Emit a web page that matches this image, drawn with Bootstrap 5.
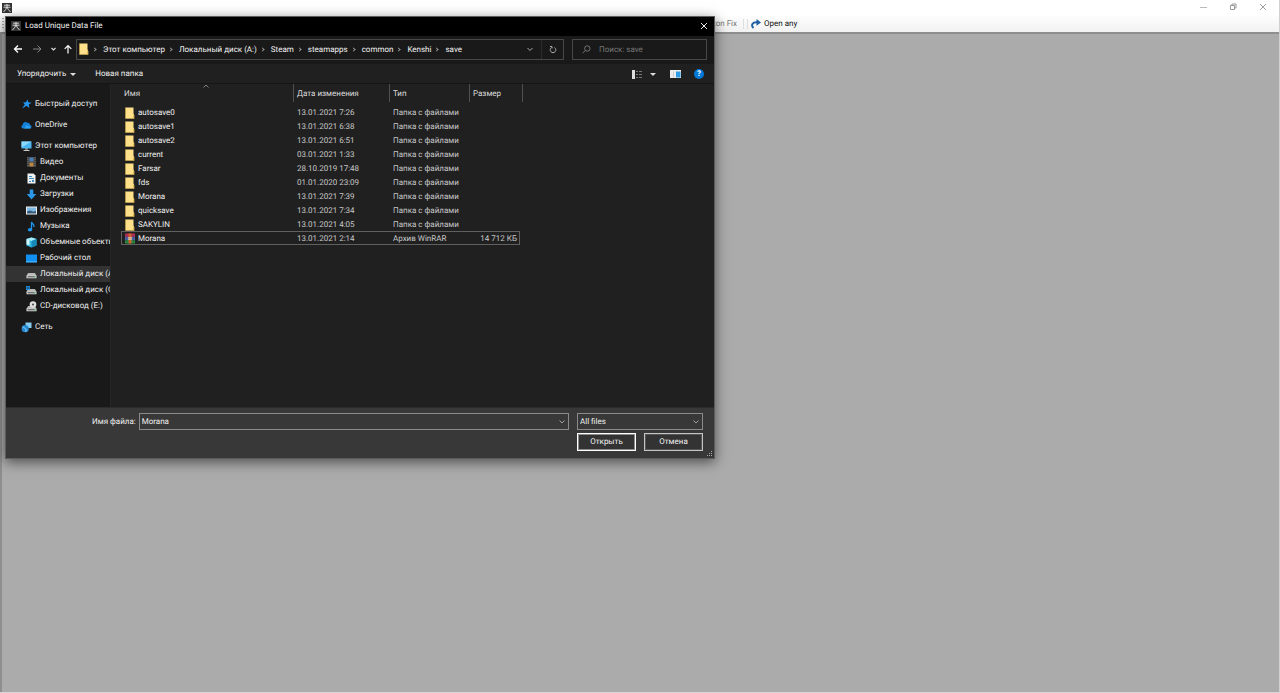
<!DOCTYPE html>
<html lang="ru">
<head>
<meta charset="utf-8">
<meta name="viewport" content="width=device-width, initial-scale=1">
<title>Load Unique Data File</title>
<link href="https://cdn.jsdelivr.net/npm/bootstrap@5.3.0/dist/css/bootstrap.min.css" rel="stylesheet">
<style>
  body { font-family: Roboto, "Open Sans", sans-serif; font-size: 8px; line-height: 14px; text-rendering: geometricPrecision; color: #f0f0f0; background: #ababab; }
  button, input, select { font: inherit; color: inherit; text-rendering: inherit; }
  svg { display: block; flex: none; }
  .app { min-height: 100vh; border-right: 1px solid #d0d0d0; border-bottom: 1px solid #d8d6d6; }
  .app-title { height: 16px; background: #fff; padding: 0 1px 0 2px; }
  .app-title button { width: 30px; height: 14px; }
  .app-tools { height: 16px; padding-bottom: 1px; background: linear-gradient(#fdfdfd, #f1f1f1); color: #111; }
  .app-client { border-top: 2px solid #8e8e8e; border-left: 2px solid #8e8e8e; }
  .grip { width: 2px; height: 11px; margin-left: 2px; background: repeating-linear-gradient(#a8a8a8 0 1px, transparent 1px 3px); }
  .tool-fix { width: 733px; color: #777; }
  .tool-sep { width: 5px; height: 10px; margin: 0 3px 0 6px; border: solid #dedede; border-width: 0 1px; }
  .tool-open { gap: 3px; }
  .plain { background: none; border: 0; padding: 0; }
  .dialog-win { left: 5px; top: 16px; width: 710px; max-width: 98vw; background: #202020; outline: 1px solid #5d5d5d; outline-offset: -1px; box-shadow: 0 3px 12px rgba(0,0,0,.55); }
  .dlg-title { height: 20px; background: #000; padding: 0 7px 0 6px; }
  .dlg-nav { height: 28px; background: #191919; padding: 0 8px 2px; gap: 8px; }
  .addr, .find { height: 21px; border: 1px solid #484848; background: #191919; }
  .addr { padding-left: 2px; }
  .crumbs a { color: #f2f2f2; text-decoration: none; padding-top: 1px; }
  .crumbs li { display: flex; align-items: center; }
  .crumbs li::before { content: ""; width: 3px; height: 3px; border: solid #9a9a9a; border-width: 1px 1px 0 0; transform: rotate(45deg); margin: 0 7px 0 4px; }
  .addr .reload { width: 22px; height: 19px; border-left: 1px solid #2c2c2c; }
  .find { width: 135px; padding-left: 9px; gap: 8px; }
  .find input { min-width: 0; width: 100%; padding-top: 1px; }
  .find input::placeholder { color: #777; opacity: 1; }
  .dlg-tools { height: 20px; padding: 1px 11px 0 12px; border-bottom: 1px solid #161616; }
  .new-folder { margin-left: 19px; }
  .preview { margin: 0 13px 0 14px; }
  .help { width: 10px; height: 10px; line-height: 10px; background: #0078d7; }
  .caret { border: 3px solid transparent; border-top-color: #ddd; border-bottom: 0; }
  .dlg-body { min-height: 323px; }
  .side { width: 106px; background: #191919; padding-top: 12px; border-right: 1px solid #262626; }
  .side a { display: flex; align-items: center; gap: 3px; height: 16px; padding-left: 16px; color: #eee; text-decoration: none; white-space: nowrap; }
  .side .sub a { padding-left: 21px; }
  .side .sub a.on { background: #333; }
  .side .root { margin-bottom: 5px; }
  .files { width: 402px; margin-left: 10px; table-layout: fixed; border-collapse: separate; border-spacing: 0; white-space: nowrap; }
  .files th { height: 21px; padding: 0; font-weight: 400; vertical-align: top; color: #ddd; }
  .files th span { display: block; height: 18px; line-height: 20px; padding-left: 3px; border-right: 1px solid #505050; }
  .files td { height: 14px; line-height: 12px; padding: 2px 0 0 3px; color: #c8c8c8; }
  .files td:first-child { color: #f0f0f0; }
  .files td > div { gap: 3px; }
  .files td:nth-child(4) { text-align: right; padding-right: 3px; }
  .files td:first-child { padding-left: 4px; }
  .files .sel td:nth-child(-n+4) { box-shadow: inset 0 1px #606060, inset 0 -1px #606060; }
  .files .sel td:first-child { box-shadow: inset 1px 1px #606060, inset 0 -1px #606060; }
  .files .sel td:nth-child(4) { box-shadow: inset 0 1px #606060, inset -1px -1px #606060; }
  .sort-mark { position: absolute; left: 91px; top: 0; }
  .dlg-foot { background: #383838; padding: 5px 12px 8px 87px; border-top: 1px solid #2b2b2b; }
  .dlg-foot input, .dlg-foot select { height: 17px; border: 1px solid #8a8a8a; border-radius: 0; background-color: #383838; padding: 0 2px; line-height: 14px; }
  .dlg-foot label { margin-right: 3px; }
  .chev { background: no-repeat right 3px center / 6px 4px url("data:image/svg+xml,%3Csvg xmlns='http://www.w3.org/2000/svg' viewBox='0 0 6 4'%3E%3Cpath d='M.5.5 3 3 5.5.5' fill='none' stroke='%23bbb' stroke-width='.8'/%3E%3C/svg%3E"); appearance: none; }
  .type-box { width: 126px; }
  .dlg-btns { margin-top: 3px; }
  .dlg-btn { width: 59px; height: 18px; background: #333; border: 1px solid #c4c4c4; padding: 0; line-height: 14px; box-shadow: inset 0 0 0 1px #555; }
  .dlg-btn.main { border-color: #fff; box-shadow: inset 0 0 0 1px #8a8a8a; }
  .resize { right: 2px; bottom: 2px; }
</style>
</head>
<body>
<svg width="0" height="0" class="position-absolute" aria-hidden="true">
  <symbol id="logo" viewBox="0 0 10 10"><rect width="10" height="10" fill="#343434"/><path d="M2 2.200h6M5 1v3M1.500 4.200h7M5 4 3.600 6.600 1.500 9M5 4l1.400 2.600L8.500 9" fill="none" stroke="#e8e8e8" stroke-width=".9"/></symbol>
  <symbol id="folder" viewBox="0 0 10 12"><path d="M.5.5h8v6l.7 1.500v3.500H.5z" fill="#ffe08a"/><path d="M.5.5H1v11H.5z" fill="#d9ae43"/><path d="M8.300 8h.9v3.500h-.9z" fill="#d8a93a"/><path d="M.5 11h8.700v.5H.5z" fill="#e2b84e"/></symbol>
  <symbol id="rar" viewBox="0 0 10 11"><rect y=".5" width="10" height="3.400" fill="#b3315b"/><rect y="3.900" width="10" height="3.300" fill="#4a63a8"/><rect y="7.200" width="10" height="3.300" fill="#2b8a41"/><rect x="3.500" y=".5" width="3" height="10" fill="#d0602b"/><rect x="3.500" y="4" width="3" height="3" fill="#f1e2bd"/><path d="M1.500.5v10M8.500.5v10" stroke="#222" stroke-opacity=".35" stroke-width=".5"/><path d="M5 4.500v2" stroke="#8f3c1d" stroke-width=".8"/></symbol>
  <symbol id="drive" viewBox="0 0 11 9"><path d="M2.200 3h6.600L10.500 5.500H.5z" fill="#b9b9b9"/><rect x=".5" y="5.300" width="10" height="3" rx=".6" fill="#e4e4e4"/><rect x="1.500" y="6.200" width="8" height="1.200" fill="#555"/><rect x="8" y="6.300" width="1.200" height="1" fill="#3fdc6a"/></symbol>
</svg>

<div class="app d-flex flex-column">
  <header class="app-title d-flex justify-content-between">
    <svg width="10" height="10" class="align-self-center"><use href="#logo"/></svg>
    <div class="d-flex">
      <button class="plain" aria-label="Свернуть"><svg class="mx-auto" width="8" height="8"><path d="M1 4.500h7" stroke="#bbb"/></svg></button>
      <button class="plain" aria-label="Восстановить"><svg class="mx-auto" width="8" height="8" fill="none" stroke="#999"><path d="M1.500 2.500h4v4h-4zM3 2V1h4v4H6"/></svg></button>
      <button class="plain" aria-label="Закрыть"><svg class="mx-auto" width="8" height="8"><path d="M1 1l6 6M7 1 1 7" stroke="#999" stroke-width=".9"/></svg></button>
    </div>
  </header>
  <div class="app-tools d-flex align-items-center">
    <span class="grip"></span>
    <button class="plain tool-fix text-end" disabled>Button Fix</button>
    <span class="tool-sep"></span>
    <button class="plain tool-open d-flex align-items-center">
      <svg width="10" height="10" viewBox="0 0 10 10"><path d="M2.500 9C-.5 6 1.500 3 6 3.300" fill="none" stroke="#1d5fa5" stroke-width="1.900"/><path d="M5.500 0 10 3.400 5.500 6.800z" fill="#1d5fa5"/></svg>Open any</button>
  </div>
  <div class="app-client flex-grow-1"></div>
</div>

<main class="dialog-win position-absolute" role="dialog" aria-label="Load Unique Data File">
  <div class="dlg-title d-flex align-items-center gap-1">
    <svg width="10" height="10"><use href="#logo"/></svg><span>Load Unique Data File</span>
    <button class="plain ms-auto" aria-label="Закрыть"><svg width="8" height="8"><path d="M1 1l6 6M7 1 1 7" stroke="#eee"/></svg></button>
  </div>

  <div class="dlg-nav d-flex align-items-center">
    <div class="d-flex align-items-center gap-2">
      <button class="plain" aria-label="Назад"><svg width="10" height="10"><path d="M9 5H1.500M5 1.500 1.500 5 5 8.500" fill="none" stroke="#fff" stroke-width="1.300"/></svg></button>
      <button class="plain" aria-label="Вперёд"><svg width="12" height="10"><path d="M2 5h8M6.500 1.500 10 5 6.500 8.500" fill="none" stroke="#858585"/></svg></button>
      <button class="plain" aria-label="Недавние"><svg width="6" height="6"><path d="M.5 2l2 2 2-2" fill="none" stroke="#ddd" stroke-width="1.200"/></svg></button>
    </div>
    <div class="d-flex align-items-center gap-1 flex-grow-1">
      <button class="plain" aria-label="Вверх"><svg width="7" height="10" overflow="visible"><path d="M3 9.500V1.500M-.3 4.800 3 1.500l3.300 3.300" fill="none" stroke="#fff" stroke-width="1.200"/></svg></button>
      <div class="addr d-flex align-items-center flex-grow-1">
        <svg width="10" height="12"><use href="#folder"/></svg>
        <ol class="crumbs list-unstyled d-flex m-0">
          <li><a href="#">Этот компьютер</a></li><li><a href="#">Локальный диск (A:)</a></li><li><a href="#">Steam</a></li><li><a href="#">steamapps</a></li><li><a href="#">common</a></li><li><a href="#">Kenshi</a></li><li><a href="#">save</a></li>
        </ol>
        <button class="plain ms-auto me-2" aria-label="Предыдущие расположения"><svg width="6" height="5"><path d="M.5 1 3 3.500 5.500 1" fill="none" stroke="#aaa"/></svg></button>
        <button class="plain reload" aria-label="Обновить"><svg class="mx-auto" width="8" height="9"><path d="M5.500 2.500A2.800 2.800 0 1 1 2.500 2.500M1 1.500h2v2" fill="none" stroke="#aaa"/></svg></button>
      </div>
    </div>
    <div class="find d-flex align-items-center">
      <svg width="9" height="9"><circle cx="5.300" cy="3.500" r="2.700" fill="none" stroke="#888" stroke-width=".8"/><path d="M3.300 5.500.5 8.300" stroke="#888" stroke-width=".8"/></svg>
      <input class="plain" type="search" placeholder="Поиск: save" aria-label="Поиск: save">
    </div>
  </div>

  <div class="dlg-tools d-flex align-items-center">
    <button class="plain d-flex align-items-center gap-1">Упорядочить <span class="caret"></span></button>
    <button class="plain new-folder">Новая папка</button>
    <button class="plain ms-auto d-flex align-items-center gap-2" aria-label="Вид"><svg width="10" height="9"><path d="M0 0h3v9H0z" fill="#ddd"/><path d="M4 1.500h2m1 0h3M4 4.500h2m1 0h3M4 7.500h2m1 0h3" stroke="#777"/></svg><span class="caret"></span></button>
    <button class="plain preview" aria-label="Область просмотра"><svg width="11" height="8"><path d="M0 0h11v8H0z" fill="#eee"/><path d="M6 1.500h4.500v6H6z" fill="#2e9fe6"/><path d="M3.500 1.500v6" stroke="#bbb" stroke-width=".6"/></svg></button>
    <button class="plain help rounded-circle text-white fw-bold" aria-label="Справка">?</button>
  </div>

  <div class="dlg-body d-flex">
    <nav class="side overflow-hidden flex-shrink-0" aria-label="Папки">
      <a class="root" href="#"><svg width="11" height="10"><path d="M6.500.5 7.300 3.300 10.500 3.800 7.800 5.500 8.300 9 5.500 6.800 1 9.500 3.800 5.500 2 3.500 5 3.300z" fill="#2196f0"/></svg>Быстрый доступ</a>
      <a class="root" href="#"><svg width="11" height="8"><path d="M2 7.500a2 2 0 0 1-.3-3.800A2.700 2.700 0 0 1 6.300 1.800a2.300 2.300 0 0 1 2.700 2 1.900 1.900 0 0 1 0 3.700z" fill="#1681d8"/><path d="M3 7.500 6 4l4 2.500-.8 1z" fill="#2ea1ee"/></svg>OneDrive</a>
      <a href="#"><svg width="11" height="10"><path d="M.5.5h10v7H.5z" fill="#49b6f2"/><path d="M.5.5h10l-10 6z" fill="#8bd8ff"/><path d="M4 8h3M2.500 9.500h6" stroke="#c8c8c8"/></svg>Этот компьютер</a>
      <div class="sub">
        <a href="#"><svg width="11" height="10"><path d="M1 0h9v10H1z" fill="#414141"/><path d="M3.500.5h4v4h-4z" fill="#4b83b9"/><path d="M3.500 5.500h4v4h-4z" fill="#ba8543"/><path d="M2 0v10M9 0v10" stroke="#777" stroke-dasharray="1 1"/></svg>Видео</a>
        <a href="#"><svg width="11" height="11"><path d="M1.500.5h6l2 2v8h-8z" fill="#f2f2f2"/><path d="M3 3.500h3M3 5.500h5M3 8.500h2" stroke="#3d91c8"/><path d="M6 7h2v2H6z" fill="#3d91c8"/></svg>Документы</a>
        <a href="#"><svg width="11" height="11"><path d="M3.700.5h3.600V5h3L5.500 10.500.7 5h3z" fill="#2b97e8"/></svg>Загрузки</a>
        <a href="#"><svg width="11" height="9"><path d="M0 .5h11v8H0z" fill="#eee"/><path d="M1 1.500h9v4H1z" fill="#7db9e4"/><path d="M1 7.500V5.500l3-1 3 1 3-.5v2.500z" fill="#31597c"/></svg>Изображения</a>
        <a href="#"><svg width="11" height="11"><path d="M5.500 8.500V1c.5 2 3 2 2.500 5" fill="none" stroke="#1c95ef" stroke-width="1.300"/><ellipse cx="4" cy="8.700" rx="2.200" ry="1.800" fill="#1c95ef"/></svg>Музыка</a>
        <a href="#"><svg width="11" height="11"><path d="M.5 2 5.500.5l5 1.500v6.500l-5 2-5-2z" fill="#36bce2"/><path d="M.5 2 5.500.5l5 1.500-5 2z" fill="#a4edfc"/><path d="M5.500 4v6.500l5-2V2z" fill="#1589b8"/><path d="M.5 2l3 1v5l-3-.5z" fill="#d3f6fc"/></svg>Объемные объекты</a>
        <a href="#"><svg width="11" height="9"><path d="M0 .5h11v8H0z" fill="#118ff0"/><path d="M0 7.800h11" stroke="#6cc2fb" stroke-width=".8"/></svg>Рабочий стол</a>
        <a class="on" href="#"><svg width="11" height="9"><use href="#drive"/></svg>Локальный диск (A:)</a>
        <a href="#"><svg width="11" height="9"><use href="#drive"/><path d="M0 0h1.700v1.700H0zM2.200 0h1.700v1.700H2.200zM0 2.200h1.700v1.700H0zM2.200 2.200h1.700v1.700H2.200z" fill="#219cf0"/></svg>Локальный диск (C:)</a>
        <a class="root" href="#"><svg width="11" height="11" viewBox="0 0 11 11"><use href="#drive" width="11" height="9" y="2"/><circle cx="7" cy="3.500" r="3.300" fill="#dedede"/><circle cx="7" cy="3.500" r="1" fill="#444"/></svg>CD-дисковод (E:)</a>
      </div>
      <a href="#"><svg width="11" height="11"><path d="M4.500.5h6v5.500h-6z" fill="#87cdf2"/><circle cx="4.200" cy="6.700" r="3.600" fill="#2587ce"/><path d="M1.500 5c2-.5 2 2 3 2s1 2 0 3" fill="none" stroke="#8fdcff"/></svg>Сеть</a>
    </nav>

    <section class="position-relative flex-grow-1">
      <svg class="sort-mark" width="8" height="4"><path d="M1.500 3.500 4 1l2.500 2.500" fill="none" stroke="#999" stroke-width=".8"/></svg>
      <table class="files">
        <colgroup><col style="width:173px"><col style="width:96px"><col style="width:80px"><col style="width:50px"><col></colgroup>
        <thead><tr><th><span>Имя</span></th><th><span>Дата изменения</span></th><th><span>Тип</span></th><th colspan="2"><span>Размер</span></th></tr></thead>
        <tbody>
          <tr><td><div class="d-flex"><svg width="10" height="12"><use href="#folder"/></svg>autosave0</div></td><td>13.01.2021 7:26</td><td>Папка с файлами</td><td></td><td></td></tr>
          <tr><td><div class="d-flex"><svg width="10" height="12"><use href="#folder"/></svg>autosave1</div></td><td>13.01.2021 6:38</td><td>Папка с файлами</td><td></td><td></td></tr>
          <tr><td><div class="d-flex"><svg width="10" height="12"><use href="#folder"/></svg>autosave2</div></td><td>13.01.2021 6:51</td><td>Папка с файлами</td><td></td><td></td></tr>
          <tr><td><div class="d-flex"><svg width="10" height="12"><use href="#folder"/></svg>current</div></td><td>03.01.2021 1:33</td><td>Папка с файлами</td><td></td><td></td></tr>
          <tr><td><div class="d-flex"><svg width="10" height="12"><use href="#folder"/></svg>Farsar</div></td><td>28.10.2019 17:48</td><td>Папка с файлами</td><td></td><td></td></tr>
          <tr><td><div class="d-flex"><svg width="10" height="12"><use href="#folder"/></svg>fds</div></td><td>01.01.2020 23:09</td><td>Папка с файлами</td><td></td><td></td></tr>
          <tr><td><div class="d-flex"><svg width="10" height="12"><use href="#folder"/></svg>Morana</div></td><td>13.01.2021 7:39</td><td>Папка с файлами</td><td></td><td></td></tr>
          <tr><td><div class="d-flex"><svg width="10" height="12"><use href="#folder"/></svg>quicksave</div></td><td>13.01.2021 7:34</td><td>Папка с файлами</td><td></td><td></td></tr>
          <tr><td><div class="d-flex"><svg width="10" height="12"><use href="#folder"/></svg>SAKYLIN</div></td><td>13.01.2021 4:05</td><td>Папка с файлами</td><td></td><td></td></tr>
          <tr class="sel"><td><div class="d-flex"><svg width="10" height="11"><use href="#rar"/></svg>Morana</div></td><td>13.01.2021 2:14</td><td>Архив WinRAR</td><td>14 712 КБ</td><td></td></tr>
        </tbody>
      </table>
    </section>
  </div>

  <form class="dlg-foot">
    <div class="d-flex align-items-center">
      <label for="fname" class="text-nowrap">Имя файла:</label>
      <input id="fname" class="chev flex-grow-1 me-2" type="text" value="Morana">
      <select class="chev type-box" aria-label="Тип файлов"><option>All files</option></select>
    </div>
    <div class="dlg-btns d-flex justify-content-end gap-2">
      <button type="button" class="dlg-btn main">Открыть</button>
      <button type="button" class="dlg-btn">Отмена</button>
    </div>
    <svg class="resize position-absolute" width="6" height="6" fill="#aaa"><path d="M4 0h1v1H4zM4 2h1v1H4zM4 4h1v1H4zM2 2h1v1H2zM2 4h1v1H2zM0 4h1v1H0z"/></svg>
  </form>
</main>
<script src="https://cdn.jsdelivr.net/npm/bootstrap@5.3.0/dist/js/bootstrap.bundle.min.js"></script>
</body>
</html>
